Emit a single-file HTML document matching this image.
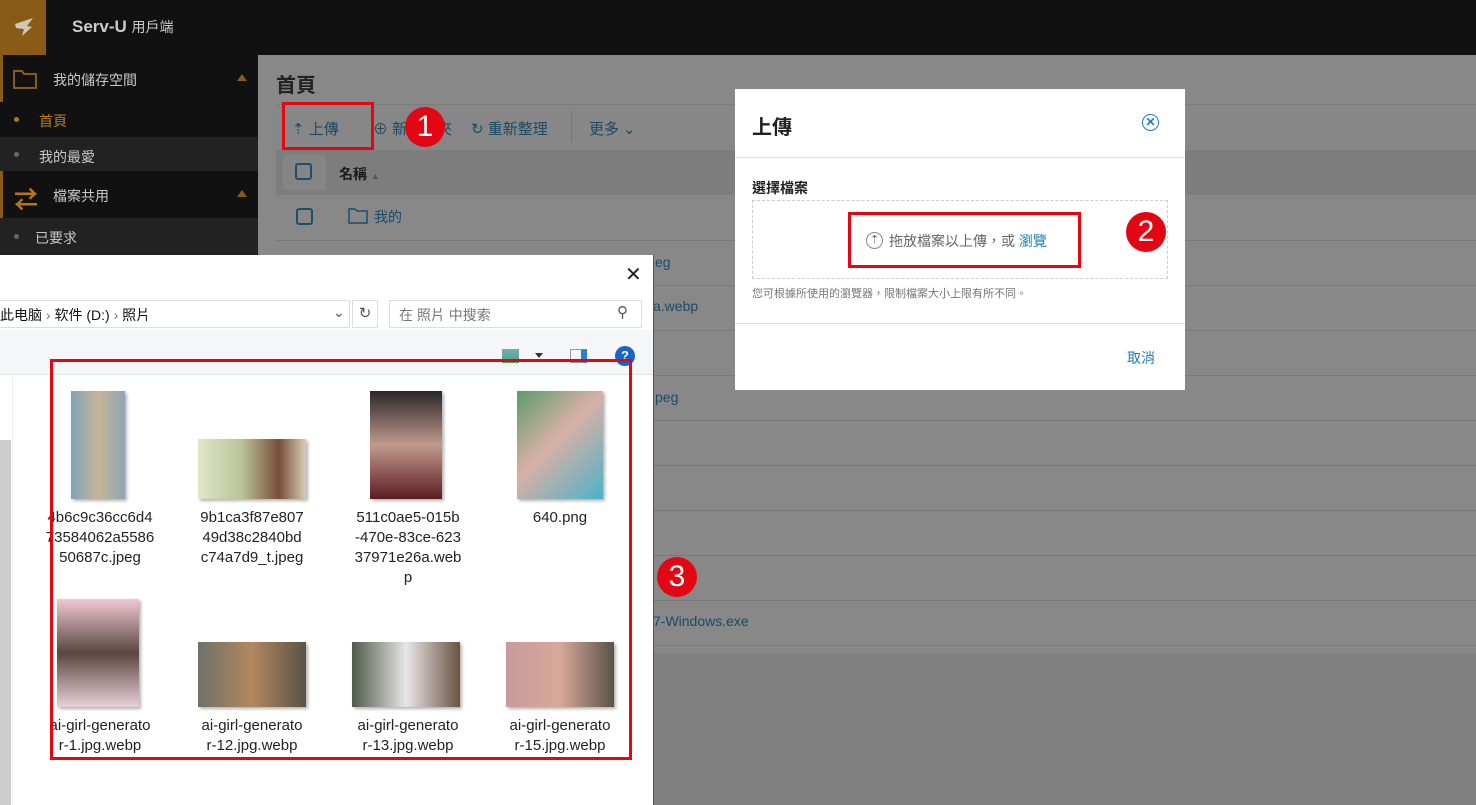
<!DOCTYPE html>
<html><head><meta charset="utf-8"><style>
*{box-sizing:border-box;margin:0;padding:0}
body{width:1476px;height:805px;overflow:hidden;position:relative;background:#888;font-family:"Liberation Sans","Noto Sans CJK TC",sans-serif}
.a{position:absolute}
.t{color:#c9c9c9;font-size:14px}
.row{position:absolute;left:276px;right:0;height:1px;background:#7a7a7a}
.lnk{color:#1a4a66;font-size:14px;position:absolute}
.cb{position:absolute;width:17px;height:17px;border:2px solid #1d4f6b;border-radius:3px}
.red{position:absolute;border:3px solid #e30613}
.num{position:absolute;width:40px;height:40px;border-radius:50%;background:#e30613;color:#fff;font-size:30px;text-align:center;line-height:40px}
.lab{position:absolute;width:140px;text-align:center;font-size:15px;line-height:20px;color:#222;white-space:nowrap}
.th{position:absolute;box-shadow:2px 2px 3px rgba(0,0,0,.3)}
</style></head><body>
<div class="a" style="left:0;top:0;width:1476px;height:55px;background:#111"></div>
<div class="a" style="left:0;top:0;width:46px;height:55px;background:#8a5a17"></div>
<svg class="a" style="left:13px;top:16px" width="22" height="22" viewBox="0 0 22 22"><path d="M2 8 L20 2 L14 10 L19 11 L9 20 L11 13 L3 12 Z" fill="#cfc7b8"/></svg>
<div class="a" style="left:72px;top:17px;color:#ccc;font-size:17px;font-weight:bold">Serv-U <span style="font-weight:normal;font-size:14px">用戶端</span></div>
<div class="a" style="left:0;top:55px;width:258px;height:750px;background:#111"></div>
<div class="a" style="left:0;top:55px;width:3px;height:47px;background:#8a5a17"></div>
<svg class="a" style="left:13px;top:69px" width="24" height="20"><path d="M1 2h8l2 3h12v14H1z" fill="none" stroke="#8a5a17" stroke-width="2"/></svg>
<div class="a t" style="left:53px;top:70px">我的儲存空間</div>
<div class="a" style="left:237px;top:74px;border:5px solid transparent;border-bottom:7px solid #8a5a17;border-top:0"></div>
<div class="a" style="left:14px;top:117px;width:5px;height:5px;border-radius:50%;background:#b8741a"></div>
<div class="a" style="left:39px;top:111px;color:#c07a20;font-size:14px">首頁</div>
<div class="a" style="left:0;top:137px;width:258px;height:34px;background:#222"></div>
<div class="a" style="left:14px;top:152px;width:5px;height:5px;border-radius:50%;background:#666"></div>
<div class="a t" style="left:39px;top:147px">我的最愛</div>
<div class="a" style="left:0;top:171px;width:3px;height:47px;background:#8a5a17"></div>
<div class="a" style="left:14px;top:180px;color:#b8741a;font-size:24px;font-weight:bold">⇄</div>
<div class="a t" style="left:53px;top:186px">檔案共用</div>
<div class="a" style="left:237px;top:190px;border:5px solid transparent;border-bottom:7px solid #8a5a17;border-top:0"></div>
<div class="a" style="left:0;top:218px;width:258px;height:40px;background:#222"></div>
<div class="a" style="left:14px;top:234px;width:5px;height:5px;border-radius:50%;background:#666"></div>
<div class="a t" style="left:35px;top:228px">已要求</div>
<div class="a" style="left:276px;top:69px;font-size:20px;font-weight:bold;color:#222">首頁</div>
<div class="a" style="left:276px;top:104px;width:1200px;height:46px;background:#878787;border-top:1px solid #7c7c7c"></div>
<div class="a" style="left:292px;top:118px;color:#1a4a66;font-size:15px">⇡ 上傳</div>
<div class="a" style="left:373px;top:118px;color:#1a4a66;font-size:15px">⊕ 新資料夾</div>
<div class="a" style="left:471px;top:118px;color:#1a4a66;font-size:15px">↻ 重新整理</div>
<div class="a" style="left:571px;top:111px;width:1px;height:32px;background:#777"></div>
<div class="a" style="left:589px;top:118px;color:#1a4a66;font-size:15px">更多 ⌄</div>
<div class="a" style="left:276px;top:150px;width:1200px;height:45px;background:#7d7d7d"></div>
<div class="a" style="left:283px;top:155px;width:43px;height:35px;background:#858585;border-radius:3px"></div>
<div class="cb" style="left:295px;top:163px"></div>
<div class="a" style="left:339px;top:164px;font-size:14px;font-weight:bold;color:#1a1a1a">名稱 <span style="font-size:9px;color:#555">▲</span></div>
<div class="cb" style="left:296px;top:208px"></div>
<svg class="a" style="left:348px;top:208px" width="20" height="16"><path d="M1 1h6l2 2h10v12H1z" fill="none" stroke="#1d4f6b" stroke-width="1.5"/></svg>
<div class="lnk" style="left:374px;top:207px">我的</div>
<div class="row" style="top:240px"></div><div class="row" style="top:285px"></div><div class="row" style="top:330px"></div><div class="row" style="top:375px"></div><div class="row" style="top:420px"></div><div class="row" style="top:465px"></div><div class="row" style="top:510px"></div><div class="row" style="top:555px"></div><div class="row" style="top:600px"></div><div class="row" style="top:645px"></div>
<div class="a" style="left:258px;top:653px;width:1218px;height:152px;background:#808080"></div>
<div class="lnk" style="left:655px;top:254px">eg</div>
<div class="lnk" style="left:653px;top:298px">a.webp</div>
<div class="lnk" style="left:655px;top:389px">peg</div>
<div class="lnk" style="left:653px;top:613px">7-Windows.exe</div>
<div class="red" style="left:282px;top:102px;width:92px;height:48px"></div>
<div class="num" style="left:405px;top:107px">1</div>
<div class="a" style="left:735px;top:89px;width:450px;height:301px;background:#fff"></div>
<div class="a" style="left:752px;top:111px;font-size:20px;font-weight:bold;color:#222">上傳</div>
<div class="a" style="left:1142px;top:114px;width:17px;height:17px;border:1.5px solid #1b7fb5;border-radius:50%;color:#1b7fb5;font-size:12px;text-align:center;line-height:14px;font-weight:bold">✕</div>
<div class="a" style="left:735px;top:157px;width:450px;height:1px;background:#ddd"></div>
<div class="a" style="left:752px;top:178px;font-size:14px;font-weight:bold;color:#222">選擇檔案</div>
<div class="a" style="left:752px;top:200px;width:416px;height:79px;border:1px dashed #ccc"></div>
<div class="a" style="left:866px;top:232px;width:17px;height:17px;border:1px solid #888;border-radius:50%;color:#666;font-size:11px;text-align:center;line-height:15px">⇡</div>
<div class="a" style="left:889px;top:231px;font-size:14px;color:#666">拖放檔案以上傳，或 <span style="color:#1b7fb5">瀏覽</span></div>
<div class="a" style="left:752px;top:285px;font-size:11px;color:#777">您可根據所使用的瀏覽器，限制檔案大小上限有所不同。</div>
<div class="a" style="left:735px;top:323px;width:450px;height:1px;background:#ddd"></div>
<div class="a" style="left:1127px;top:348px;font-size:14px;color:#1b7fb5">取消</div>
<div class="red" style="left:848px;top:212px;width:233px;height:56px"></div>
<div class="num" style="left:1126px;top:212px">2</div>
<div class="num" style="left:657px;top:557px">3</div>
<div class="a" style="left:0;top:255px;width:654px;height:550px;background:#fff;border-right:1px solid #555"></div>
<div class="a" style="left:625px;top:262px;font-size:20px;color:#222">✕</div>
<div class="a" style="left:0;top:300px;width:350px;height:28px;border:1px solid #ddd;border-left:0"></div>
<div class="a" style="left:0;top:305px;font-size:14px;color:#111">此电脑 <span style="color:#777">›</span> 软件 (D:) <span style="color:#777">›</span> 照片</div>
<div class="a" style="left:333px;top:304px;font-size:14px;color:#555">⌄</div>
<div class="a" style="left:352px;top:300px;width:26px;height:28px;border:1px solid #ddd;font-size:15px;color:#555;text-align:center;line-height:26px">↻</div>
<div class="a" style="left:389px;top:300px;width:253px;height:28px;border:1px solid #ddd"></div>
<div class="a" style="left:399px;top:305px;font-size:14px;color:#777">在 照片 中搜索</div>
<div class="a" style="left:617px;top:303px;font-size:15px;color:#555">⚲</div>
<div class="a" style="left:0;top:330px;width:653px;height:45px;background:#f5f6f7;border-bottom:1px solid #e5e5e5"></div>
<div class="a" style="left:502px;top:349px;width:17px;height:14px;background:linear-gradient(#7ab,#4a7)"></div>
<div class="a" style="left:535px;top:353px;border:4px solid transparent;border-top:5px solid #333"></div>
<div class="a" style="left:570px;top:349px;width:17px;height:14px;border:1px solid #999;border-right:6px solid #2a7fd5"></div>
<div class="a" style="left:615px;top:346px;width:20px;height:20px;border-radius:50%;background:#1a64c8;color:#fff;font-size:13px;text-align:center;line-height:20px;font-weight:bold">?</div>
<div class="a" style="left:0;top:440px;width:11px;height:365px;background:#cdcdcd"></div>
<div class="a" style="left:12px;top:376px;width:1px;height:429px;background:#eee"></div>
<div class="th" style="left:71px;top:391px;width:54px;height:108px;background:linear-gradient(90deg,#7fa3b5,#c7b49a 50%,#8ea7b2)"></div>
<div class="th" style="left:198px;top:439px;width:108px;height:60px;background:linear-gradient(90deg,#dfe7c8,#b9c49a 40%,#7a4f3a 75%,#d8ccb8)"></div>
<div class="th" style="left:370px;top:391px;width:72px;height:108px;background:linear-gradient(#2a2628,#c19a8c 50%,#5a1c22)"></div>
<div class="th" style="left:517px;top:391px;width:86px;height:108px;background:linear-gradient(135deg,#5c9a6a,#d8b0a5 45%,#4db2c8)"></div>
<div class="th" style="left:57px;top:599px;width:82px;height:108px;background:linear-gradient(#f0c8d2,#5a4640 50%,#e8d0d8)"></div>
<div class="th" style="left:198px;top:642px;width:108px;height:65px;background:linear-gradient(90deg,#6f7168,#b2885f 50%,#5a5248)"></div>
<div class="th" style="left:352px;top:642px;width:108px;height:65px;background:linear-gradient(90deg,#4f5a4a,#e8e6e8 50%,#6a5240)"></div>
<div class="th" style="left:506px;top:642px;width:108px;height:65px;background:linear-gradient(90deg,#c89a9a,#d8a89a 50%,#5a5248)"></div>
<div class="lab" style="left:30px;top:508px">4b6c9c36cc6d4<br>73584062a5586<br>50687c.jpeg</div>
<div class="lab" style="left:182px;top:508px">9b1ca3f87e807<br>49d38c2840bd<br>c74a7d9_t.jpeg</div>
<div class="lab" style="left:338px;top:508px">511c0ae5-015b<br>-470e-83ce-623<br>37971e26a.web<br>p</div>
<div class="lab" style="left:490px;top:508px">640.png</div>
<div class="lab" style="left:30px;top:716px">ai-girl-generato<br>r-1.jpg.webp</div>
<div class="lab" style="left:182px;top:716px">ai-girl-generato<br>r-12.jpg.webp</div>
<div class="lab" style="left:338px;top:716px">ai-girl-generato<br>r-13.jpg.webp</div>
<div class="lab" style="left:490px;top:716px">ai-girl-generato<br>r-15.jpg.webp</div>
<div class="red" style="left:50px;top:359px;width:582px;height:401px"></div>
</body></html>
